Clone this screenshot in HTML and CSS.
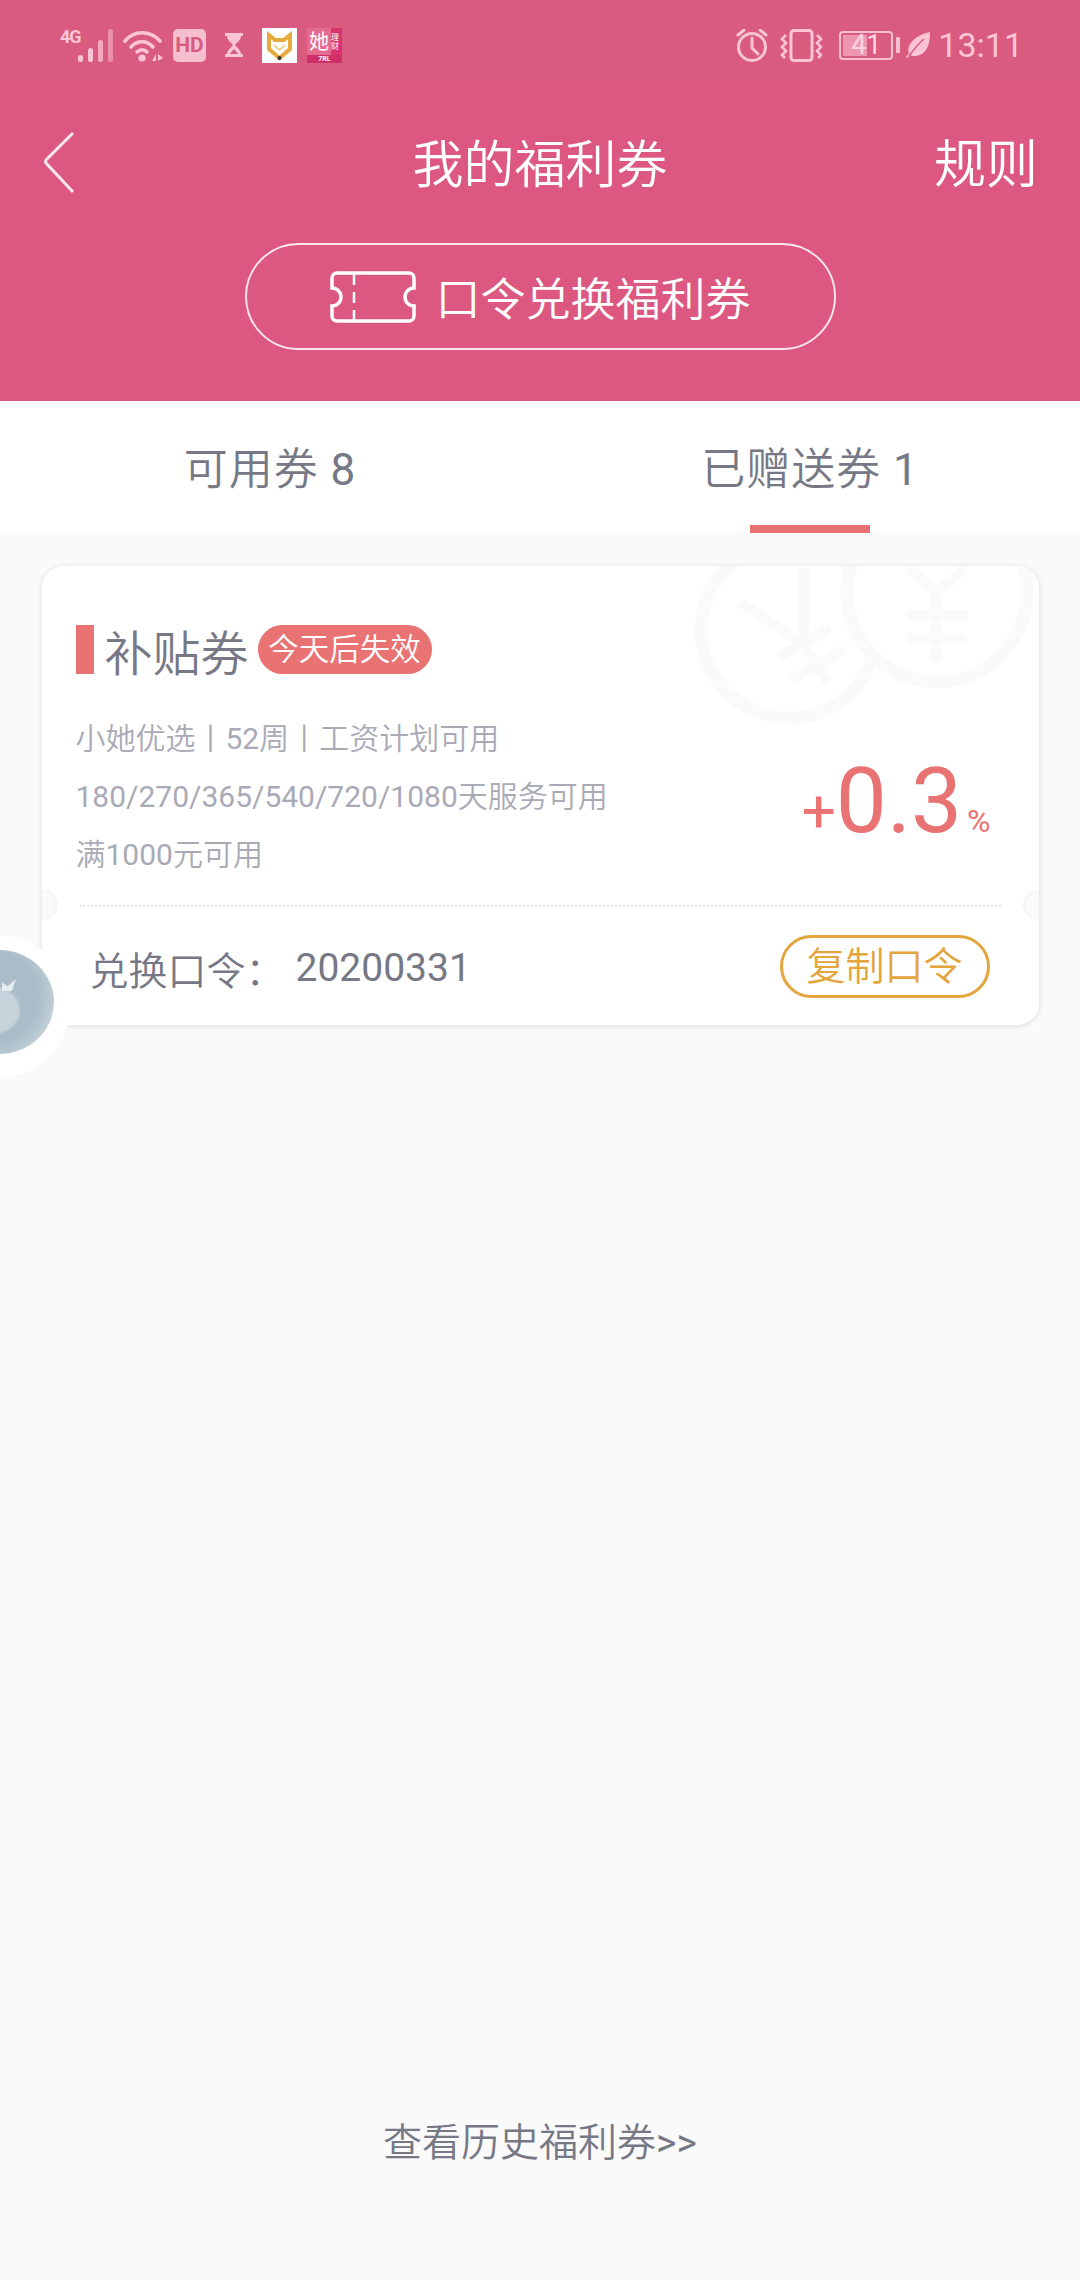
FILE: index.html
```html
<!DOCTYPE html>
<html lang="zh-CN">
<head>
    <meta charset="UTF-8">
    <meta name="viewport" content="width=device-width, initial-scale=1.0">
    <title>我的福利券</title>
    <link rel="stylesheet" href="styles.css">
</head>
<body>
    <div class="page">
        <!-- status bar -->
        <div class="status">
            <div class="status-left">
                <span class="net">4G</span>
                <svg class="ic-signal" width="35" height="33" viewBox="0 0 35 33"><g fill="#fbc5d5"><rect x="0" y="26" width="5" height="7" rx="2.5"/><rect x="10" y="19" width="5" height="14" rx="2.5"/></g><rect x="20" y="11" width="5" height="22" rx="2.5" fill="#f4a9c0"/><rect x="30" y="0" width="5" height="33" rx="2.5" fill="#ec8fab"/></svg>
                <svg class="ic-wifi" width="40" height="33" viewBox="0 0 40 33"><g fill="none" stroke="#fbc5d5" stroke-width="3.6" stroke-linecap="round"><path d="M2 12C11 1 27 1 37 12"/><path d="M8 18C14 11 24 11 30 18"/><path d="M14 23C17 20 21 20 24 23"/></g><circle cx="19" cy="29" r="3.6" fill="#fbc5d5"/><path d="M29 32l4-7v7zM35 25l5 4-5 3z" fill="#fbc5d5"/></svg>
                <span class="hd">HD</span>
                <svg class="ic-glass" width="18" height="25" viewBox="0 0 18 25"><path d="M0 0h18v3h-2c0 4-4 6-6 9 2 3 6 5 6 9h2v3H0v-3h2c0-4 4-6 6-9-2-3-6-5-6-9H0z" fill="#fbc5d5"/><path d="M5 21c1-2 3-4 4-5 1 1 3 3 4 5z" fill="#d95b80"/></svg>
                <span class="app-fox"><svg width="35" height="35" viewBox="0 0 35 35"><path d="M7 7l6 5h9l6-5v14l-10.500 9L7 21z" fill="none" stroke="#e5ab3f" stroke-width="4"/><path d="M12 17l5.500 5 5.500-5" fill="none" stroke="#f2d08c" stroke-width="2"/><circle cx="17.500" cy="30" r="2" fill="#333"/></svg></span>
                <span class="app-she"><span class="she-big">她</span><small>理财</small><em>7RL</em></span>
            </div>
            <div class="status-right">
                <svg class="ic-alarm" width="32" height="33" viewBox="0 0 32 33"><g fill="none" stroke="#fbc5d5" stroke-width="3"><circle cx="16" cy="18" r="13.500"/><path d="M16 9v10l6 6" stroke-linecap="round"/><path d="M2 6l6-5M30 6l-6-5" stroke-linecap="round"/></g></svg>
                <svg class="ic-vibrate" width="43" height="33" viewBox="0 0 43 33"><rect x="11" y="1.500" width="21" height="30" rx="3" fill="none" stroke="#fbc5d5" stroke-width="3"/><g fill="none" stroke="#fbc5d5" stroke-width="2.600"><path d="M6 6L2 10l4 4-4 4 4 4-4 4 3 3"/><path d="M37 6l4 4-4 4 4 4-4 4 4 4-3 3"/></g></svg>
                <div class="battery"><div class="battery-body"><span class="battery-fill"></span><span class="battery-num">41</span></div><span class="battery-nub"></span></div>
                <svg class="ic-leaf" width="24" height="26" viewBox="0 0 24 26"><path d="M24 0C24 14 20 24 8 24c-2 0-3-.5-4-1L1 26 0 25l3-4C0 12 10 3 24 0z" fill="#f9c3d3"/><path d="M3 24C8 17 12 12 18 7" fill="none" stroke="#d95b80" stroke-width="1.500"/></svg>
                <span class="time">13:11</span>
            </div>
        </div>

        <!-- pink head -->
        <div class="head">
            <div class="nav">
                <a class="back"><svg width="34" height="62" viewBox="0 0 34 62"><path d="M31 2L4 29a3 3 0 0 0 0 3l27 29" fill="none" stroke="#fbe6ed" stroke-width="3"/></svg></a>
                <span class="nav-title">我的福利券</span>
                <a class="nav-rule">规则</a>
            </div>
            <a class="code-btn">
                <svg width="88" height="54" viewBox="0 0 88 54"><path d="M8 3h72a5 5 0 0 1 5 5v10a9 9 0 0 0 0 18v10a5 5 0 0 1-5 5H8a5 5 0 0 1-5-5V36a9 9 0 0 0 0-18V8a5 5 0 0 1 5-5z" fill="none" stroke="#fff" stroke-width="3.500"/><path d="M25 3v12M25 22v11M25 40v11" stroke="#fff" stroke-width="2.500"/></svg>
                <span>口令兑换福利券</span>
            </a>
        </div>

        <!-- tabs -->
        <div class="tabs">
            <div class="tab">可用券 <span class="d">8</span></div>
            <div class="tab on">已赠送券 <span class="d">1</span></div>
        </div>

        <div class="main">
            <div class="card">
                <div class="coins">
                    <svg width="360" height="175" viewBox="0 0 360 175">
                        <g fill="none" stroke="#fafafa">
                            <circle cx="110" cy="64" r="88" stroke-width="13"/>
                            <path stroke-width="10" d="M62 37l63 42M125 2v77l24 38M99 91l53-29M112 114l52-30"/>
                            <circle cx="258" cy="26" r="90" stroke-width="13" fill="#fff"/>
                            <path stroke-width="10" d="M230 2l27 25 30-25M257 27v69M228 49h60M228 72h60"/>
                        </g>
                    </svg>
                </div>
                <div class="card-top">
                    <div class="card-title">
                        <span class="mark"></span>
                        <span class="name">补贴券</span>
                        <span class="tag">今天后失效</span>
                    </div>
                    <div class="card-info">
                        <div class="lines">
                            <p>小她优选丨<span class="d">52</span>周丨工资计划可用</p>
                            <p><span class="d">180/270/365/540/720/1080</span>天服务可用</p>
                            <p>满<span class="d">1000</span>元可用</p>
                        </div>
                        <div class="rate"><span class="plus">+</span><span class="num">0.3</span><span class="pct">%</span></div>
                    </div>
                </div>
                <span class="notch notch-l"></span>
                <span class="notch notch-r"></span>
                <div class="card-foot">
                    <div class="code"><span class="code-label">兑换口令：</span><span class="code-num">20200331</span></div>
                    <a class="copy">复制口令</a>
                </div>
            </div>
            <a class="history">查看历史福利券<span class="d">&gt;&gt;</span></a>
        </div>

        <!-- floating ball -->
        <div class="ball"><span class="ball-inner"><span class="ball-fruit"></span><span class="ball-leaf"></span></span></div>
    </div>
</body>
</html>
```

FILE: styles.css
```css
*{ margin: 0; padding: 0; box-sizing: border-box;}
html, body{ height: 100%;}
body{ font-family: Roboto, "Noto Sans CJK SC", sans-serif; font-weight: 350; background: #fafafa; overflow: hidden;}
a{ display: block;}
.d{ font-weight: 400;}

.page{ position: relative; width: 1080px; height: 2280px; display: flex; flex-direction: column; overflow: hidden;}

/* status bar */
.status{ height: 80px; flex: none; background: #d95b80; display: flex; justify-content: space-between; align-items: center; padding: 10px 57px 0 60px; color: #fbc5d5; font-weight: 400;}
.status-left, .status-right{ display: flex; align-items: center;}
.status svg{ display: block; flex: none;}
.net{ width: 18px; font-size: 18px; font-weight: 700; line-height: 16px; margin-top: -17px; letter-spacing: -1px; white-space: nowrap;}
.ic-wifi{ margin-left: 10px;}
.hd{ width: 33px; height: 33px; margin-left: 10px; border-radius: 5px; background: #f6bfd0; color: #d95b80; font-size: 21px; font-weight: 700; line-height: 33px; text-align: center;}
.ic-glass{ margin-left: 19px;}
.app-fox{ width: 35px; height: 35px; margin-left: 19px; background: #fff;}
.app-she{ position: relative; width: 35px; height: 35px; margin-left: 10px; background: linear-gradient(90deg, #e56a90 0, #e56a90 68%, #d8336f 68%, #d8336f 100%); color: #fff; overflow: hidden;}
.she-big{ position: absolute; left: 2px; top: 4px; font-size: 20px; line-height: 20px;}
.app-she small{ position: absolute; left: 24px; top: 5px; width: 9px; font-size: 8px; line-height: 9px;}
.app-she em{ position: absolute; left: 0; right: 0; bottom: 0; height: 8px; background: #cf2e69; font-size: 7px; font-style: normal; font-weight: 700; line-height: 8px; text-align: center;}
.ic-vibrate{ margin-left: 12px;}
.battery{ display: flex; align-items: center; margin-left: 16px;}
.battery-body{ position: relative; width: 54px; height: 29px; border: 2px solid #f6bfd0; border-radius: 4px;}
.battery-fill{ position: absolute; left: 2px; top: 2px; bottom: 2px; width: 24px; background: #ee95b0;}
.battery-num{ position: absolute; left: 0; right: 0; top: 0; font-size: 27px; line-height: 25px; text-align: center; color: #fbd5e0;}
.battery-nub{ width: 4px; height: 16px; margin-left: 3px; background: #f6bfd0; border-radius: 1px;}
.ic-leaf{ margin-left: 6px;}
.time{ margin-left: 8px; font-size: 34px; line-height: 40px;}

/* pink head */
.head{ height: 321px; flex: none; background: #dd5880; color: #fff;}
.nav{ height: 163px; position: relative; display: flex; align-items: center; justify-content: space-between; padding: 0 42px 0 42px;}
.back svg{ display: block;}
.nav-title{ position: absolute; left: 0; right: 0; top: 53px; text-align: center; font-size: 51px; line-height: 66px;}
.nav-rule{ font-size: 52px; line-height: 66px; margin-top: 9px;}
.code-btn{ width: 591px; height: 107px; margin: 0 auto; border: 2px solid #fbe6ed; border-radius: 54px; display: flex; align-items: center; justify-content: center; gap: 18px; font-size: 45px;}
.code-btn svg{ display: block;}

/* tabs */
.tabs{ height: 132px; flex: none; background: #fff; display: flex;}
.tab{ position: relative; flex: 1; padding-top: 4px; text-align: center; font-size: 44px; line-height: 130px; letter-spacing: 1px; color: #777885;}
.tab.on::after{ content: ""; position: absolute; left: 210px; bottom: 0; width: 120px; height: 8px; background: #e97272;}

/* card */
.main{ flex: 1; display: flex; flex-direction: column; justify-content: space-between; align-items: center; padding: 33px 42px 113px;}
.card{ position: relative; width: 997px; height: 459px; background: #fff; border-radius: 22px; box-shadow: 0 1px 6px rgba(0, 0, 0, .12);}
.coins{ position: absolute; right: 0; top: 0; width: 360px; height: 175px; overflow: hidden; border-top-right-radius: 22px;}
.coins svg{ display: block;}
.card-top{ position: relative; height: 339px; padding: 59px 0 0 34px;}
.card-title{ display: flex; align-items: center; height: 49px;}
.mark{ width: 18px; height: 49px; background: #e97272;}
.name{ margin-left: 11px; font-size: 48px; color: #777885;}
.tag{ margin-left: 9px; width: 174px; height: 49px; border-radius: 25px; background: #e97272; color: #fff; font-size: 30.500px; line-height: 50px; text-align: center;}
.card-info{ display: flex; justify-content: space-between; align-items: center; padding-right: 48px;}
.lines{ padding-top: 36px; font-size: 30px; line-height: 58px; color: #a9aab6;}
.rate{ color: #e97272; display: flex; align-items: baseline; margin-top: 44px; font-weight: 400;}
.plus{ font-size: 60px; line-height: 1;}
.num{ font-size: 91px; line-height: 1;}
.pct{ margin-left: 5px; font-size: 32px; line-height: 1;}
.notch{ position: absolute; top: 324px; width: 16px; height: 30px; background: #fafafa;}
.notch-l{ left: 0; border-radius: 0 15px 15px 0; box-shadow: inset -2px 0 3px rgba(0, 0, 0, .03);}
.notch-r{ right: 0; border-radius: 15px 0 0 15px; box-shadow: inset 2px 0 3px rgba(0, 0, 0, .03);}
.card-foot{ height: 120px; margin: 0 38px; border-top: 2px dotted #e6e6e6; display: flex; justify-content: space-between; align-items: center; padding: 0 11px 0 10px;}
.code{ font-size: 39px; color: #777885; display: flex; align-items: center; padding-top: 4px;}
.code-label{ width: 206px;}
.code-num{ font-size: 39px; font-weight: 400;}
.copy{ width: 210px; height: 63px; border: 3px solid #e4a53d; border-radius: 32px; color: #e4a53d; font-size: 39px; line-height: 58px; text-align: center;}

.history{ font-size: 39px; color: #777885;}

/* floating ball */
.ball{ position: absolute; left: -70px; top: 936px; width: 140px; height: 141px; border-radius: 50%; background: radial-gradient(circle, #fff 0, #fff 78%, rgba(248, 240, 243, .9) 92%, rgba(255, 255, 255, 0) 100%);}
.ball-inner{ position: absolute; left: 14px; top: 14px; width: 110px; height: 104px; border-radius: 50%; overflow: hidden; background: radial-gradient(circle at 42% 45%, #a9bcc8 0, #a9bcc8 55%, #bccbd4 72%, #e6ecf0 90%, #fff 100%);}
.ball-fruit{ position: absolute; left: 22px; top: 37px; width: 54px; height: 47px; border-radius: 50%; background: #c6d3da; filter: blur(1px);}
.ball-leaf{ position: absolute; left: 58px; top: 29px; width: 14px; height: 12px; background: #e6ecf0; clip-path: polygon(0 30%, 40% 60%, 100% 0, 70% 100%, 0 100%);}
```
